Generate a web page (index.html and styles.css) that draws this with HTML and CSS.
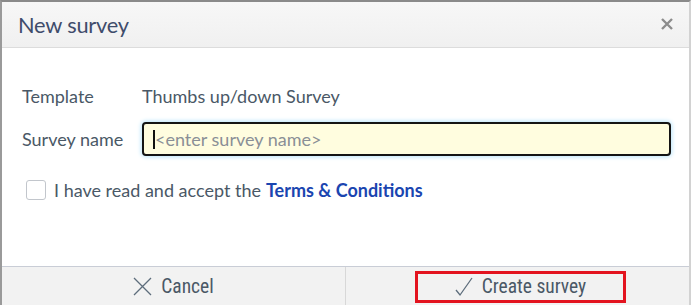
FILE: index.html
```html
<!DOCTYPE html>
<html>
<head>
<meta charset="utf-8">
<title>New survey</title>
<link rel="stylesheet" href="styles.css">
</head>
<body>
<div class="dialog">
  <header class="dialog-head">
    <h1>New survey</h1>
    <svg class="close" width="12" height="12" viewBox="0 0 12 12"><path d="M1 1L11 11M11 1L1 11" stroke="#8c8c8c" stroke-width="2.4" fill="none"/></svg>
  </header>
  <div class="dialog-body">
    <div class="row">
      <label>Template</label>
      <span class="value">Thumbs up/down Survey</span>
    </div>
    <div class="row">
      <label for="name">Survey name</label>
      <div class="field"><span class="caret"></span><span class="placeholder">&lt;enter survey name&gt;</span></div>
    </div>
    <div class="terms">
      <span class="check"></span>
      I have read and accept the <a href="#">Terms &amp; Conditions</a>
    </div>
  </div>
  <footer class="dialog-foot">
    <div class="btn">
      <svg width="19" height="19" viewBox="0 0 19 19"><path d="M1 1L18 18M18 1L1 18" stroke="#5d6d7c" stroke-width="1.3" fill="none"/></svg>
      Cancel
    </div>
    <div class="btn">
      <span class="hl">
        <svg width="18" height="20" viewBox="0 0 18 20"><path d="M1 13L5 18L17 1" stroke="#5d6d7c" stroke-width="1.3" fill="none"/></svg>
        Create survey
      </span>
    </div>
  </footer>
</div>
</body>
</html>
```
FILE: styles.css
```css
html, body { margin: 0; height: 100%; }
body { font-family: Lato, "Open Sans", sans-serif; color: #4a5866; background: #fff; }

.dialog {
  height: 305px;
  box-sizing: border-box;
  border-top: 2px solid #8a8a8a;
  border-left: 2px solid #9a9a9a;
  border-right: 2px solid #d2d2d2;
  display: flex;
  flex-direction: column;
}

.dialog-head {
  height: 46px;
  box-sizing: border-box;
  background: linear-gradient(#f7f7f7, #f0f0f0);
  border-bottom: 1px solid #dcdcdc;
  display: flex;
  align-items: center;
  justify-content: space-between;
  padding: 0 16px 0 16px;
}
.dialog-head h1 { margin: 0; font-weight: 400; font-size: 21.8px; color: #3f4c6b; letter-spacing: -0.2px; }
.close { display: block; margin-top: -2px; }

.dialog-body { flex: 1; padding: 31px 18px 0 20px; font-size: 18px; }
.row { display: flex; align-items: center; height: 34px; margin-bottom: 9px; }
.row label { width: 120px; }
.field {
  flex: 1;
  height: 34px;
  box-sizing: border-box;
  border: 2px solid #141414;
  border-radius: 4px;
  background: #fffddf;
  box-shadow: 0 0 4px 1px #b8e4fa;
  display: flex;
  align-items: center;
  padding-left: 9px;
}
.caret { width: 2px; height: 19px; background: #111; }
.placeholder { color: #8a8f96; }

.terms { display: flex; align-items: center; margin-top: 23px; padding-left: 4px; }
.check {
  width: 18px; height: 18px;
  border: 1px solid #c2c6cc;
  border-radius: 3px;
  margin-right: 8px;
}
.terms a { color: #1a45b0; font-weight: 700; text-decoration: none; margin-left: 5px; }

.dialog-foot {
  height: 39px;
  box-sizing: border-box;
  border-top: 1px solid #c9cdd6;
  background: #f2f2f2;
  display: flex;
  font-family: "Liberation Sans Narrow", "Roboto Condensed", Roboto, sans-serif;
  font-size: 19.5px;
  color: #4a5866;
}
.btn { flex: 1; display: flex; align-items: center; justify-content: center; gap: 9px; }
.btn + .btn { border-left: 1px solid #d8d8d8; }
.btn svg { display: block; }
.hl {
  display: flex; align-items: center; justify-content: center; gap: 9px;
  width: 211px; height: 32px;
  box-sizing: border-box;
  border: 3px solid #e3141f;
  margin-left: 6px;
  margin-top: 1px;
}
```
